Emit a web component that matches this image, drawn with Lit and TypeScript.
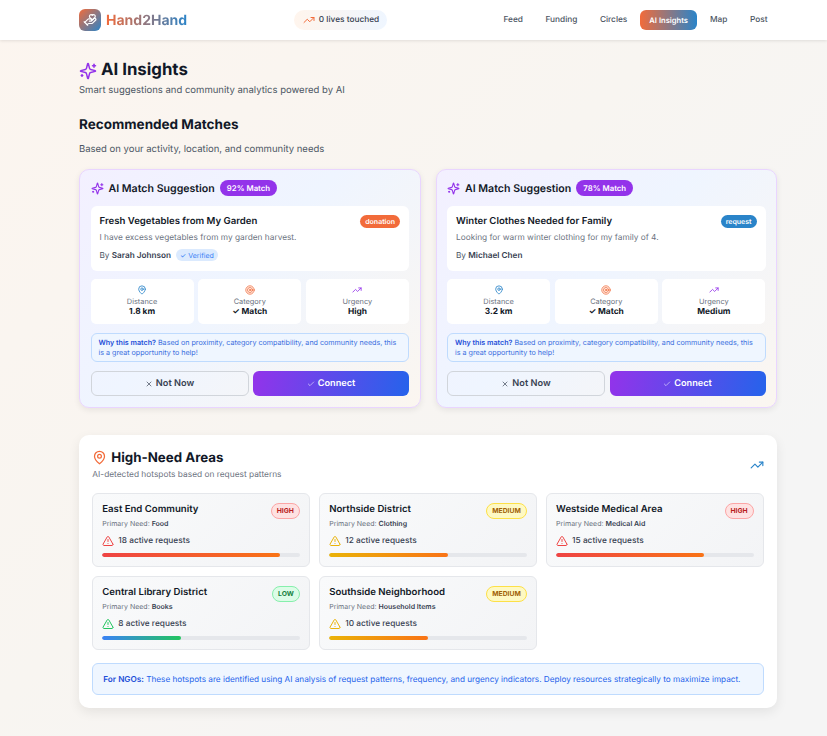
import { LitElement, html, css, svg } from 'lit';
import { customElement } from 'lit/decorators.js';

const sparkles = svg`<path d="M9.937 15.5A2 2 0 0 0 8.5 14.063l-6.135-1.582a.5.5 0 0 1 0-.962L8.5 9.936A2 2 0 0 0 9.937 8.5l1.582-6.135a.5.5 0 0 1 .963 0L14.063 8.5A2 2 0 0 0 15.5 9.937l6.135 1.581a.5.5 0 0 1 0 .964L15.5 14.063a2 2 0 0 0-1.437 1.437l-1.582 6.135a.5.5 0 0 1-.963 0z"/><path d="M20 3v4"/><path d="M22 5h-4"/><path d="M4 17v2"/><path d="M5 18H3"/>`;
const trend = svg`<polyline points="22 7 13.5 15.5 8.5 10.5 2 17"/><polyline points="16 7 22 7 22 13"/>`;
const pin = svg`<path d="M20 10c0 6-8 12-8 12s-8-6-8-12a8 8 0 0 1 16 0Z"/><circle cx="12" cy="10" r="3"/>`;
const target = svg`<circle cx="12" cy="12" r="10"/><circle cx="12" cy="12" r="6"/><circle cx="12" cy="12" r="2"/>`;
const xIcon = svg`<path d="M18 6 6 18"/><path d="m6 6 12 12"/>`;
const check = svg`<path d="M20 6 9 17l-5-5"/>`;
const alert = svg`<path d="m21.73 18-8-14a2 2 0 0 0-3.48 0l-8 14A2 2 0 0 0 4 21h16a2 2 0 0 0 1.73-3Z"/><path d="M12 9v4"/><path d="M12 17h.01"/>`;
const handHeart = svg`<path d="M11 14h2a2 2 0 1 0 0-4h-3c-.6 0-1.1.2-1.4.6L3 16"/><path d="m7 20 1.6-1.4c.3-.4.8-.6 1.4-.6h4c1.1 0 2.1-.4 2.8-1.2l4.6-4.4a2 2 0 0 0-2.75-2.91l-4.2 3.9"/><path d="m2 15 6 6"/><path d="M19.5 8.5c.7-.7 1.5-1.6 1.5-2.7A2.73 2.73 0 0 0 16 4a2.78 2.78 0 0 0-5 1.8c0 1.2.8 2 1.5 2.8L16 12Z"/>`;

const icon = (body: unknown, size: number, color: string, width = 2) => html`<svg
  width=${size} height=${size} viewBox="0 0 24 24" fill="none" stroke=${color}
  stroke-width=${width} stroke-linecap="round" stroke-linejoin="round">${body}</svg>`;

const links = ['Feed', 'Funding', 'Circles', 'AI Insights', 'Map', 'Post'];

const matches = [
  {
    score: '92% Match', title: 'Fresh Vegetables from My Garden', kind: 'donation',
    desc: 'I have excess vegetables from my garden harvest.', by: 'Sarah Johnson', verified: true,
    distance: '1.8 km', urgency: 'High',
  },
  {
    score: '78% Match', title: 'Winter Clothes Needed for Family', kind: 'request',
    desc: 'Looking for warm winter clothing for my family of 4.', by: 'Michael Chen', verified: false,
    distance: '3.2 km', urgency: 'Medium',
  },
];

const areas = [
  { name: 'East End Community', need: 'Food', level: 'high', count: 18, pct: 90 },
  { name: 'Northside District', need: 'Clothing', level: 'medium', count: 12, pct: 60 },
  { name: 'Westside Medical Area', need: 'Medical Aid', level: 'high', count: 15, pct: 75 },
  { name: 'Central Library District', need: 'Books', level: 'low', count: 8, pct: 40 },
  { name: 'Southside Neighborhood', need: 'Household Items', level: 'medium', count: 10, pct: 50 },
];

const levelColor: Record<string, string> = { high: '#ef4444', medium: '#eab308', low: '#22c55e' };

@customElement('app-root')
export class AppRoot extends LitElement {
  static styles = css`
    :host {
      display: block;
      min-height: 100vh;
      background: linear-gradient(135deg, #fcf5ef 0%, #f8f5f1 45%, #f5f5f5 80%);
      font-family: Inter, "Noto Sans", sans-serif;
      color: #111827;
      text-rendering: geometricPrecision;
    }
    svg { display: block; flex: none; }

    .nav {
      height: 40px;
      background: #fff;
      box-shadow: 0 1px 3px rgba(0, 0, 0, 0.1);
      padding: 0 50px 0 79px;
      display: flex;
      align-items: center;
      justify-content: space-between;
    }
    .brand { display: flex; align-items: center; gap: 5px; }
    .logo {
      width: 22px;
      height: 22px;
      border-radius: 6px;
      background: linear-gradient(135deg, #f26b3a, #2a84c9);
      display: flex;
      align-items: center;
      justify-content: center;
    }
    .brand-name {
      font-size: 14px;
      font-weight: 700;
      background: linear-gradient(90deg, #f26b3a, #2a84c9);
      -webkit-background-clip: text;
      background-clip: text;
      color: transparent;
    }
    .lives {
      height: 20px;
      padding: 0 8px 0 9px;
      border-radius: 10px;
      background: linear-gradient(90deg, #fff5ed, #eff6ff);
      display: flex;
      align-items: center;
      gap: 4px;
      font-size: 8.3px;
      font-weight: 500;
      color: #374151;
    }
    .links { display: flex; align-items: center; gap: 3.5px; }
    .link {
      height: 20px;
      padding: 0 9.5px;
      border-radius: 6px;
      display: flex;
      align-items: center;
      font-size: 8.3px;
      font-weight: 500;
      color: #4b5563;
    }
    .link.active {
      padding: 0 9px;
      background: linear-gradient(90deg, #f26b3a, #2a84c9);
      color: #fff;
      font-size: 7.6px;
      font-weight: 600;
    }

    .page { padding: 21px 50px 28px 79px; }
    .heading { display: flex; align-items: center; gap: 4px; height: 19px; }
    .heading h1 { margin: 0; font-size: 16.8px; line-height: 19px; font-weight: 700; }
    .sub { margin: 4px 0 0; font-size: 9.5px; line-height: 14px; color: #4b5563; }
    h2 { margin: 17px 0 0; font-size: 13.5px; line-height: 20px; font-weight: 700; }
    .sub2 { margin: 7.5px 0 0; font-size: 9.5px; line-height: 14px; color: #4b5563; }

    .matches {
      margin-top: 12.5px;
      display: grid;
      grid-template-columns: 1fr 1fr;
      gap: 15px;
    }
    .match {
      border: 1.5px solid #e9d5ff;
      border-radius: 10px;
      background: linear-gradient(135deg, #f3f0ff 0%, #eff5ff 45%, #fbf6f0 100%);
      box-shadow: 0 2px 6px rgba(0, 0, 0, 0.08);
      padding: 10px 10.5px 11px;
    }
    .match-head { display: flex; align-items: center; gap: 5px; height: 16px; }
    .match-head b { font-size: 10.6px; font-weight: 600; }
    .score {
      height: 16px;
      padding: 0 7px;
      border-radius: 8px;
      background: #9333ea;
      color: #fff;
      display: flex;
      align-items: center;
      font-size: 7.8px;
      font-weight: 600;
    }
    .post {
      margin-top: 9.5px;
      background: #fff;
      border-radius: 6px;
      padding: 9px;
      height: 65px;
      box-sizing: border-box;
    }
    .post-top { display: flex; justify-content: space-between; align-items: flex-start; }
    .post-title { font-size: 9.6px; line-height: 13px; font-weight: 600; }
    .kind {
      height: 13px;
      padding: 0 5px;
      border-radius: 7px;
      color: #fff;
      font-size: 7px;
      font-weight: 600;
      display: flex;
      align-items: center;
    }
    .kind.donation { background: #f26b3a; }
    .kind.request { background: #2a84c9; }
    .post-desc { margin-top: 4px; font-size: 8.3px; line-height: 13px; color: #6b7280; }
    .post-by {
      margin-top: 4px;
      display: flex;
      align-items: center;
      gap: 5px;
      font-size: 8.2px;
      line-height: 13px;
      color: #4b5563;
    }
    .post-by b { color: #374151; font-weight: 600; }
    .verified {
      height: 12px;
      padding: 0 4px;
      border-radius: 6px;
      background: #dbeafe;
      color: #3b82f6;
      font-size: 7px;
      display: flex;
      align-items: center;
    }
    .stats {
      margin-top: 8.5px;
      display: grid;
      grid-template-columns: repeat(3, 1fr);
      gap: 4.5px;
    }
    .stat {
      height: 45px;
      background: #fff;
      border-radius: 5px;
      display: flex;
      flex-direction: column;
      align-items: center;
      padding-top: 6px;
      box-sizing: border-box;
    }
    .stat span { margin-top: 2px; font-size: 7.4px; line-height: 10px; color: #6b7280; }
    .stat b { font-size: 8.4px; line-height: 10px; font-weight: 700; }
    .why {
      margin-top: 9px;
      height: 29px;
      box-sizing: border-box;
      border: 1px solid #bfdbfe;
      border-radius: 6px;
      background: #eff6ff;
      padding: 4px 7px;
      font-size: 7.15px;
      line-height: 9.5px;
      color: #3b6fe0;
    }
    .why b { color: #1d4ed8; font-weight: 600; }
    .actions { margin-top: 9px; display: grid; grid-template-columns: 158px 1fr; gap: 4.5px; }
    .btn {
      height: 25px;
      box-sizing: border-box;
      border-radius: 6px;
      display: flex;
      align-items: center;
      justify-content: center;
      gap: 3px;
      font-size: 9.2px;
      font-weight: 600;
    }
    .btn.ghost { border: 1.5px solid #d1d5db; color: #374151; background: transparent; }
    .btn.go { background: linear-gradient(100deg, #9333ea, #2563eb); color: #fff; }

    .areas {
      margin-top: 26.5px;
      background: #fff;
      border-radius: 10px;
      box-shadow: 0 4px 12px rgba(0, 0, 0, 0.08);
      padding: 14px 13.3px 13px;
    }
    .areas-head { display: flex; justify-content: space-between; align-items: center; }
    .areas-title { display: flex; align-items: center; gap: 4px; }
    .areas-title h3 { margin: 0; font-size: 13.3px; line-height: 18px; font-weight: 700; }
    .areas-sub { margin-top: 2px; font-size: 8.35px; line-height: 13px; color: #6b7280; }
    .area-grid {
      margin-top: 11px;
      display: grid;
      grid-template-columns: repeat(3, 1fr);
      gap: 9.3px;
    }
    .area {
      height: 74px;
      box-sizing: border-box;
      border: 1px solid #e5e7eb;
      border-radius: 6px;
      background: linear-gradient(135deg, #f9fafb, #f3f4f6);
      padding: 9px;
    }
    .area-top { display: flex; justify-content: space-between; align-items: flex-start; }
    .area-name { font-size: 9.6px; line-height: 13px; font-weight: 600; }
    .level {
      height: 16px;
      box-sizing: border-box;
      padding: 0 5px;
      border-radius: 8px;
      border: 1.2px solid;
      display: flex;
      align-items: center;
      font-size: 6.8px;
      font-weight: 700;
    }
    .level.high { background: #fee2e2; border-color: #fca5a5; color: #b91c1c; }
    .level.medium { background: #fef9c3; border-color: #fde047; color: #a16207; }
    .level.low { background: #dcfce7; border-color: #86efac; color: #15803d; }
    .area-need { font-size: 7px; line-height: 10px; color: #6b7280; }
    .area-need b { color: #374151; font-weight: 600; }
    .area-count {
      margin-top: 6px;
      display: flex;
      align-items: center;
      gap: 4px;
      font-size: 8.3px;
      font-weight: 500;
      color: #374151;
    }
    .track { margin-top: 6.5px; height: 4px; border-radius: 2px; background: #e5e7eb; overflow: hidden; }
    .fill { height: 100%; border-radius: 2px; }
    .fill.high { background: linear-gradient(90deg, #ef4444, #f97316); }
    .fill.medium { background: linear-gradient(90deg, #eab308, #f97316); }
    .fill.low { background: linear-gradient(90deg, #3b82f6, #22c55e); }
    .ngo {
      margin-top: 13px;
      height: 32px;
      box-sizing: border-box;
      border: 1px solid #bfdbfe;
      border-radius: 6px;
      background: #eff6ff;
      padding: 0 10px;
      display: flex;
      align-items: center;
      font-size: 8.2px;
      color: #2563eb;
      white-space: pre;
    }
    .ngo b { color: #1d4ed8; font-weight: 600; }
  `;

  renderMatch(m: (typeof matches)[number]) {
    return html`<section class="match">
      <div class="match-head">
        ${icon(sparkles, 13, '#9333ea')}
        <b>AI Match Suggestion</b>
        <span class="score">${m.score}</span>
      </div>
      <div class="post">
        <div class="post-top">
          <span class="post-title">${m.title}</span>
          <span class="kind ${m.kind}">${m.kind}</span>
        </div>
        <div class="post-desc">${m.desc}</div>
        <div class="post-by">
          <span>By <b>${m.by}</b></span>
          ${m.verified ? html`<span class="verified">✓ Verified</span>` : ''}
        </div>
      </div>
      <div class="stats">
        <div class="stat">${icon(pin, 10, '#2a84c9')}<span>Distance</span><b>${m.distance}</b></div>
        <div class="stat">${icon(target, 10, '#f26b3a')}<span>Category</span><b>✓ Match</b></div>
        <div class="stat">${icon(trend, 10, '#9333ea')}<span>Urgency</span><b>${m.urgency}</b></div>
      </div>
      <div class="why">
        <b>Why this match?</b> Based on proximity, category compatibility, and community needs, this is a great opportunity to help!
      </div>
      <div class="actions">
        <div class="btn ghost">${icon(xIcon, 8, '#374151')}Not Now</div>
        <div class="btn go">${icon(check, 8, '#fff', 1.6)}Connect</div>
      </div>
    </section>`;
  }

  renderArea(a: (typeof areas)[number]) {
    return html`<div class="area">
      <div class="area-top">
        <span class="area-name">${a.name}</span>
        <span class="level ${a.level}">${a.level.toUpperCase()}</span>
      </div>
      <div class="area-need">Primary Need: <b>${a.need}</b></div>
      <div class="area-count">${icon(alert, 12, levelColor[a.level])}${a.count} active requests</div>
      <div class="track"><div class="fill ${a.level}" style="width: ${a.pct}%"></div></div>
    </div>`;
  }

  render() {
    return html`
      <header class="nav">
        <div class="brand">
          <div class="logo">${icon(handHeart, 14, '#fff')}</div>
          <span class="brand-name">Hand2Hand</span>
        </div>
        <div class="lives">${icon(trend, 12, '#f26b3a')}0 lives touched</div>
        <nav class="links">
          ${links.map((l) => html`<span class="link ${l === 'AI Insights' ? 'active' : ''}">${l}</span>`)}
        </nav>
      </header>
      <main class="page">
        <div class="heading">${icon(sparkles, 18, '#9333ea')}<h1>AI Insights</h1></div>
        <p class="sub">Smart suggestions and community analytics powered by AI</p>
        <h2>Recommended Matches</h2>
        <p class="sub2">Based on your activity, location, and community needs</p>
        <div class="matches">${matches.map((m) => this.renderMatch(m))}</div>
        <section class="areas">
          <div class="areas-head">
            <div>
              <div class="areas-title">${icon(pin, 15, '#f26b3a')}<h3>High-Need Areas</h3></div>
              <div class="areas-sub">AI-detected hotspots based on request patterns</div>
            </div>
            ${icon(trend, 14, '#2a84c9')}
          </div>
          <div class="area-grid">${areas.map((a) => this.renderArea(a))}</div>
          <div class="ngo"><b>For NGOs:</b> These hotspots are identified using AI analysis of request patterns, frequency, and urgency indicators. Deploy resources strategically to maximize impact.</div>
        </section>
      </main>
    `;
  }
}
